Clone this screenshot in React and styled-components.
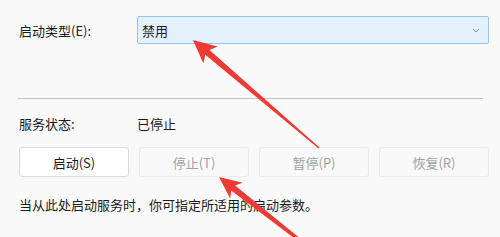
import React from "react";
import styled, { createGlobalStyle } from "styled-components";

const Global = createGlobalStyle`
  html, body { margin: 0; padding: 0; background: #f9f9f9; }
  body { font-family: "Noto Sans CJK SC", "Noto Sans", sans-serif; }
  #root { width: 500px; height: 237px; overflow: hidden; }
`;

const Page = styled.div`
  position: relative;
  width: 500px;
  height: 237px;
  background: #f9f9f9;
  color: #1a1a1a;
  font-size: 13px;
  box-sizing: border-box;
  padding: 16px 11px 0 19px;
  display: flex;
  flex-direction: column;
`;

const Row = styled.div`
  display: flex;
  align-items: center;
  height: ${(p) => p.$h}px;
  margin-top: ${(p) => p.$mt || 0}px;
`;

const Label = styled.div`
  width: 118px;
  flex: none;
  line-height: 1;
`;

const Select = styled.div`
  flex: 1;
  height: 28px;
  box-sizing: border-box;
  background: #e4f0fb;
  border: 1px solid #95c5ea;
  border-radius: 2px;
  display: flex;
  align-items: center;
  justify-content: space-between;
  padding: 0 8px 0 4px;
`;

const Separator = styled.div`
  height: 1px;
  background: #c4c4c4;
  margin: 54px 6px 0 -1px;
`;

const ButtonRow = styled.div`
  display: grid;
  grid-template-columns: repeat(4, 110px);
  gap: 10px;
  margin-top: 16px;
`;

const Button = styled.div`
  height: 30px;
  box-sizing: border-box;
  display: flex;
  align-items: center;
  justify-content: center;
  border-radius: 3px;
  border: 1px solid ${(p) => (p.$disabled ? "#ebebeb" : "#dadada")};
  background: ${(p) => (p.$disabled ? "#f9f9f9" : "#ffffff")};
  color: ${(p) => (p.$disabled ? "#a2a2a2" : "#1a1a1a")};
`;

const Note = styled.div`
  margin-top: 21px;
  line-height: 1;
`;

const Overlay = styled.svg`
  position: absolute;
  left: 0;
  top: 0;
  pointer-events: none;
`;

function arrowPoints(tip, tail, headLen, headHalf, neck, tailHalf) {
  const dx = tip[0] - tail[0];
  const dy = tip[1] - tail[1];
  const len = Math.hypot(dx, dy);
  const ux = dx / len, uy = dy / len;
  const nx = -uy, ny = ux;
  const bx = tip[0] - ux * headLen, by = tip[1] - uy * headLen;
  const nbx = tip[0] - ux * (headLen - 4), nby = tip[1] - uy * (headLen - 4);
  const pts = [
    [tip[0], tip[1]],
    [bx + nx * headHalf, by + ny * headHalf],
    [nbx + nx * neck, nby + ny * neck],
    [tail[0] + nx * tailHalf, tail[1] + ny * tailHalf],
    [tail[0] - nx * tailHalf, tail[1] - ny * tailHalf],
    [nbx - nx * neck, nby - ny * neck],
    [bx - nx * headHalf, by - ny * headHalf],
  ];
  return pts.map((p) => p.map((v) => v.toFixed(1)).join(",")).join(" ");
}

export default function App() {
  return (
    <>
      <Global />
      <Page>
        <Row $h={28}>
          <Label>启动类型(E):</Label>
          <Select>
            <span>禁用</span>
            <svg width="8" height="5" viewBox="0 0 8 5">
              <path d="M1 1 L4 4 L7 1" fill="none" stroke="#888" strokeWidth="1" />
            </svg>
          </Select>
        </Row>
        <Separator />
        <Row $h={16} $mt={16}>
          <Label>服务状态:</Label>
          <span>已停止</span>
        </Row>
        <ButtonRow>
          <Button>启动(S)</Button>
          <Button $disabled>停止(T)</Button>
          <Button $disabled>暂停(P)</Button>
          <Button $disabled>恢复(R)</Button>
        </ButtonRow>
        <Note>当从此处启动服务时，你可指定所适用的启动参数。</Note>
        <Overlay width="500" height="237" viewBox="0 0 500 237">
          <polygon
            fill="#ee3a35"
            points={arrowPoints([193, 40], [319, 148], 23, 11, 3.2, 0.8)}
          />
          <polygon
            fill="#ee3a35"
            points={arrowPoints([219, 177], [302, 242], 22, 10, 3.2, 1.6)}
          />
        </Overlay>
      </Page>
    </>
  );
}
